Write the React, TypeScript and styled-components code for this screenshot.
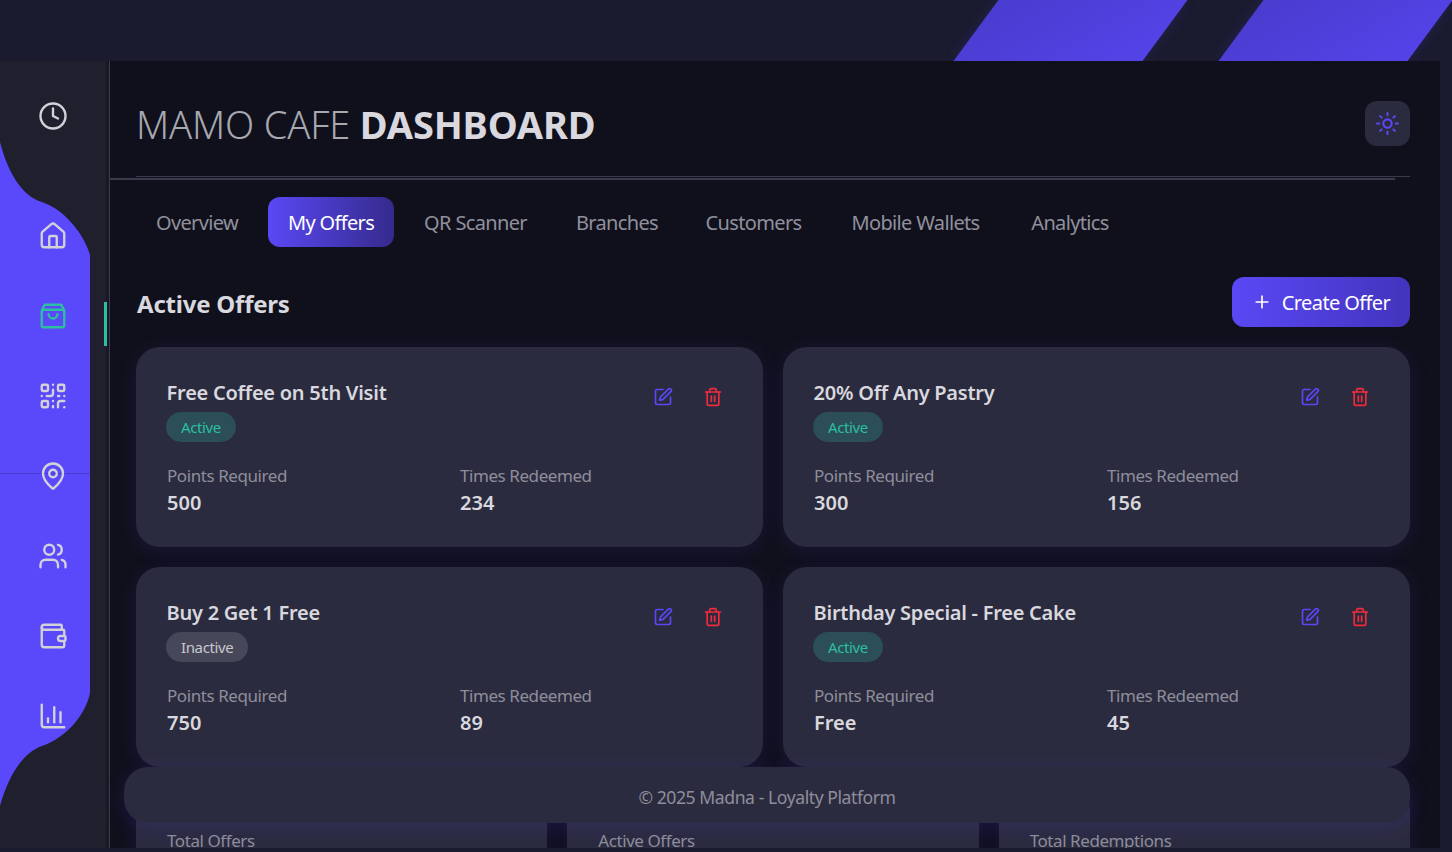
import React from "react";
import styled, { createGlobalStyle } from "styled-components";
import {
  Clock,
  House,
  QrCode,
  MapPin,
  Users,
  Wallet,
  ChartColumn,
  SquarePen,
  Trash2,
  Sun,
  Plus,
} from "lucide-react";

const Global = createGlobalStyle`
  html, body { margin: 0; padding: 0; height: 100%; overflow: hidden; background: #1a1b2e; }
  body { font-family: "Noto Sans", "Open Sans", sans-serif; }
  * { box-sizing: border-box; }
`;

const Page = styled.div`
  width: 1452px;
  height: 852px;
  display: flex;
  flex-direction: column;
  background: #1a1b2e;
  overflow: hidden;
`;

const TopBand = styled.div`
  height: 61px;
  flex: none;
  display: flex;
  justify-content: flex-end;
  gap: 76px;
  padding-right: 22px;
  overflow: hidden;
`;

const Stripe = styled.div`
  width: 189px;
  height: 100%;
  transform: skewX(-36.4deg);
  background: linear-gradient(135deg, #4a3ccf, #5443e8);
  box-shadow: 0 0 12px rgba(88, 70, 255, 0.18);
`;

const Body = styled.div`
  flex: 1;
  min-height: 0;
  display: flex;
  margin: 0 12px 4px 0;
`;

const Sidebar = styled.aside`
  position: relative;
  width: 110px;
  flex: none;
  padding: 15px 4px 0 0;
  background: #1f1f2e;
  border-right: 1px solid #3a3a4c;
  box-shadow: inset -3px 0 0 #191926;
`;

const Blob = styled.svg`
  position: absolute;
  left: 0;
  top: 0;
`;

const SideItem = styled.div<{ $spaced?: boolean; $active?: boolean }>`
  position: relative;
  height: 80px;
  margin-bottom: ${(p) => (p.$spaced ? "40px" : "0")};
  display: flex;
  align-items: center;
  justify-content: center;
  color: ${(p) => (p.$active ? "#2dbfa0" : "#d2d2d8")};

  & > svg {
    position: relative;
  }
`;

const Accent = styled.span`
  position: absolute;
  right: -2px;
  top: 26px;
  width: 3px;
  height: 44px;
  background: #2dbfa0;
`;

const Main = styled.main`
  position: relative;
  flex: 1;
  min-width: 0;
  padding: 0 30px 0 26px;
  background: #10101c;
  overflow: hidden;
`;

const Header = styled.header`
  height: 116px;
  display: flex;
  align-items: center;
  justify-content: space-between;
  padding: 13px 0 0 0;
  border-bottom: 1px solid #3a3a4c;
`;

const UnderLine = styled.div`
  height: 2px;
  margin: 1px 15px 0 -26px;
  background: #3a3a4c;
`;

const Title = styled.h1`
  margin: -2px 0 0 0;
  font-size: 38px;
  line-height: 50px;
  font-weight: 300;
  color: #a8a8b0;
  letter-spacing: -0.15px;
  white-space: nowrap;
`;

const TitleStrong = styled.strong`
  font-weight: 700;
  color: #d8d8de;
`;

const ThemeButton = styled.button`
  width: 45px;
  height: 45px;
  border: 0;
  border-radius: 12px;
  padding: 0;
  background: #2b2b3f;
  color: #5a48f5;
  display: flex;
  align-items: center;
  justify-content: center;
  margin-top: -3px;
`;

const Tabs = styled.nav`
  display: flex;
  gap: 10px;
  margin-top: 17px;
`;

const Tab = styled.div<{ $active?: boolean; $width: number }>`
  width: ${(p) => p.$width}px;
  height: 50px;
  border-radius: 12px;
  display: flex;
  align-items: center;
  justify-content: center;
  font-size: 20px;
  letter-spacing: -0.65px;
  white-space: nowrap;
  color: ${(p) => (p.$active ? "#ffffff" : "#90909c")};
  background: ${(p) =>
    p.$active ? "linear-gradient(90deg, #5a48f5, #352a8c)" : "transparent"};
`;

const SectionHead = styled.div`
  display: flex;
  align-items: center;
  justify-content: space-between;
  margin-top: 30px;
`;

const SectionTitle = styled.h2`
  margin: 4px 0 0 1px;
  font-size: 24px;
  line-height: 46px;
  font-weight: 700;
  color: #d8d8de;
  letter-spacing: -0.22px;
`;

const CreateButton = styled.button`
  width: 178px;
  height: 50px;
  border: 0;
  border-radius: 12px;
  display: flex;
  align-items: center;
  justify-content: center;
  gap: 10px;
  font-family: inherit;
  font-size: 20px;
  letter-spacing: -0.6px;
  color: #fff;
  background: linear-gradient(90deg, #5a48f5, #4334bd);
`;

const OfferGrid = styled.div`
  display: grid;
  grid-template-columns: 1fr 1fr;
  gap: 20px;
  margin-top: 20px;
`;

const OfferCard = styled.article`
  height: 200px;
  padding: 30px;
  border-radius: 24px;
  background: #2b2b3f;
  box-shadow: 0 4px 20px rgba(88, 70, 255, 0.12);
  display: flex;
  flex-direction: column;
`;

const CardTop = styled.div`
  display: flex;
  justify-content: space-between;
  align-items: flex-start;
`;

const CardTitle = styled.h3`
  margin: 0 0 3px 0;
  padding-left: 0.6px;
  font-size: 20px;
  line-height: 32px;
  font-weight: 600;
  color: #d8d8de;
  letter-spacing: -0.25px;
`;

const Badge = styled.span<{ $active: boolean }>`
  display: inline-flex;
  align-items: center;
  height: 30px;
  padding: 0 15px;
  border-radius: 15px;
  font-size: 15px;
  letter-spacing: -0.38px;
  color: ${(p) => (p.$active ? "#2dbfa0" : "#c8c8d0")};
  background: ${(p) => (p.$active ? "#2b4e58" : "#47475a")};
`;

const Actions = styled.div`
  display: flex;
  gap: 10px;
`;

const IconButton = styled.button<{ $danger?: boolean }>`
  width: 40px;
  height: 40px;
  border: 0;
  padding: 0;
  background: transparent;
  color: ${(p) => (p.$danger ? "#f02b3c" : "#5a48f5")};
  display: flex;
  align-items: center;
  justify-content: center;
`;

const Stats = styled.div`
  display: grid;
  grid-template-columns: 1fr 1fr;
  gap: 20px;
  margin-top: 21px;
  padding-left: 1px;
`;

const StatLabel = styled.div`
  font-size: 17px;
  line-height: 26px;
  color: #8e8e9b;
  letter-spacing: -0.43px;
`;

const StatValue = styled.div`
  font-size: 20px;
  line-height: 28px;
  font-weight: 600;
  color: #d8d8de;
`;

const SummaryGrid = styled.div`
  display: grid;
  grid-template-columns: repeat(3, 1fr);
  gap: 20px;
  margin-top: 20px;
`;

const SummaryCard = styled.div`
  height: 200px;
  padding: 41px 30px 0 31px;
  border-radius: 24px;
  background: #2b2b3f;
  box-shadow: 0 4px 20px rgba(88, 70, 255, 0.12);
`;

const Footer = styled.footer`
  position: absolute;
  left: 14px;
  right: 30px;
  top: 706px;
  height: 56px;
  padding-top: 3px;
  border-radius: 24px;
  background: #2b2b3f;
  box-shadow: 0 4px 20px rgba(88, 70, 255, 0.15);
  display: flex;
  align-items: center;
  justify-content: center;
  font-size: 17.6px;
  letter-spacing: -0.44px;
  color: #8e8e9b;
`;

const BagIcon = () => (
  <svg width="30" height="30" viewBox="0 0 24 24" fill="none" stroke="currentColor" strokeWidth="1.9" strokeLinecap="round" strokeLinejoin="round">
    <path d="M3.2 7 5.4 3h13.2l2.2 4" />
    <rect x="3" y="7" width="18" height="14" rx="1.5" />
    <path d="M8.5 10.5a3.5 3.5 0 0 0 7 0" />
  </svg>
);

const offers = [
  { title: "Free Coffee on 5th Visit", active: true, points: "500", redeemed: "234" },
  { title: "20% Off Any Pastry", active: true, points: "300", redeemed: "156" },
  { title: "Buy 2 Get 1 Free", active: false, points: "750", redeemed: "89" },
  { title: "Birthday Special - Free Cake", active: true, points: "Free", redeemed: "45" },
];

const tabs = [
  { label: "Overview", width: 122 },
  { label: "My Offers", width: 126 },
  { label: "QR Scanner", width: 143 },
  { label: "Branches", width: 120 },
  { label: "Customers", width: 133 },
  { label: "Mobile Wallets", width: 171 },
  { label: "Analytics", width: 118 },
];

const icon = { size: 30, strokeWidth: 1.9 };

export default function App() {
  return (
    <Page>
      <Global />
      <TopBand>
        <Stripe />
        <Stripe />
      </TopBand>
      <Body>
        <Sidebar>
          <Blob width="90" height="787" viewBox="0 0 90 787">
            <path
              d="M0 81C8 112 22 135 42 141C68 150 86 178 90 194V632C86 652 68 676 42 685C22 692 8 716 0 745Z"
              fill="#5a48fb"
            />
            <rect x="0" y="412" width="90" height="1" fill="#4b3bcf" />
          </Blob>
          <SideItem $spaced><Clock {...icon} /></SideItem>
          <SideItem><House {...icon} /></SideItem>
          <SideItem $active><BagIcon /><Accent /></SideItem>
          <SideItem><QrCode {...icon} /></SideItem>
          <SideItem><MapPin {...icon} /></SideItem>
          <SideItem><Users {...icon} /></SideItem>
          <SideItem><Wallet {...icon} /></SideItem>
          <SideItem><ChartColumn {...icon} /></SideItem>
        </Sidebar>
        <Main>
          <Header>
            <Title>
              MAMO CAFE <TitleStrong>DASHBOARD</TitleStrong>
            </Title>
            <ThemeButton aria-label="Theme"><Sun size={25} strokeWidth={2} /></ThemeButton>
          </Header>
          <UnderLine />
          <Tabs>
            {tabs.map((t) => (
              <Tab key={t.label} $width={t.width} $active={t.label === "My Offers"}>{t.label}</Tab>
            ))}
          </Tabs>
          <SectionHead>
            <SectionTitle>Active Offers</SectionTitle>
            <CreateButton><Plus size={20} />Create Offer</CreateButton>
          </SectionHead>
          <OfferGrid>
            {offers.map((o) => (
              <OfferCard key={o.title}>
                <CardTop>
                  <div>
                    <CardTitle>{o.title}</CardTitle>
                    <Badge $active={o.active}>{o.active ? "Active" : "Inactive"}</Badge>
                  </div>
                  <Actions>
                    <IconButton aria-label="Edit"><SquarePen size={20} /></IconButton>
                    <IconButton aria-label="Delete" $danger><Trash2 size={20} /></IconButton>
                  </Actions>
                </CardTop>
                <Stats>
                  <div>
                    <StatLabel>Points Required</StatLabel>
                    <StatValue>{o.points}</StatValue>
                  </div>
                  <div>
                    <StatLabel>Times Redeemed</StatLabel>
                    <StatValue>{o.redeemed}</StatValue>
                  </div>
                </Stats>
              </OfferCard>
            ))}
          </OfferGrid>
          <SummaryGrid>
            <SummaryCard><StatLabel>Total Offers</StatLabel></SummaryCard>
            <SummaryCard><StatLabel>Active Offers</StatLabel></SummaryCard>
            <SummaryCard><StatLabel>Total Redemptions</StatLabel></SummaryCard>
          </SummaryGrid>
          <Footer>© 2025 Madna - Loyalty Platform</Footer>
        </Main>
      </Body>
    </Page>
  );
}
